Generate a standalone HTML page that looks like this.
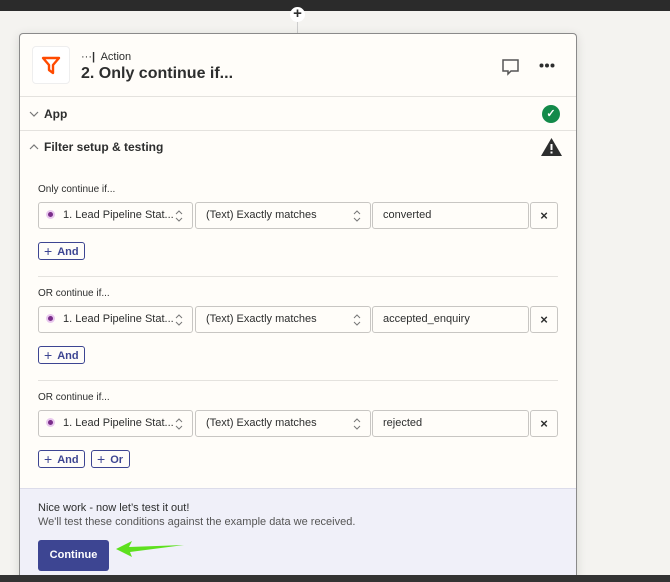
<!DOCTYPE html>
<html><head><style>
*{box-sizing:border-box;margin:0;padding:0}
html,body{width:670px;height:582px;overflow:hidden}
body{background:#f4f3f0;font-family:"Liberation Sans",sans-serif;color:#2d2e2e;position:relative}
.a{position:absolute}
.top{left:0;top:0;width:670px;height:11px;background:#2b2b2b}
.card{left:19px;top:33px;width:558px;height:549px;background:#fffdf9;border:1px solid #8a8a8a;border-bottom:none;border-radius:4px 4px 0 0;box-shadow:0 2px 10px rgba(0,0,0,.12);overflow:hidden}
.hl{height:1px;background:#e4e2de;left:0;width:558px}
.lbl{font-size:10px;color:#2d2e2e}
.box{height:27px;border:1px solid #c8c6c3;border-radius:3px;background:#fffdf9;font-size:11px;line-height:25px;padding-left:10px;color:#2d2e2e}
.btn{height:18px;border:1px solid #3d4592;border-radius:3px;font-size:11px;line-height:16px;color:#3d4592;padding-left:5px;font-weight:bold}
.btn b{font-size:14px;font-weight:normal;margin-right:5px;vertical-align:-1px}
.chev{position:absolute;right:9px;top:7px}
.dot{display:inline-block;width:9px;height:9px;border-radius:50%;background:#7a2d8a;border:2px solid #e9c8ee;vertical-align:-1px;margin-right:8px;margin-left:-3px}
</style></head><body>
<div class="a top"></div>
<div class="a" style="left:297px;top:11px;width:1px;height:25px;background:#ccc"></div>
<div class="a" style="left:290px;top:7px;width:15px;height:15px;border-radius:50%;background:#fff;text-align:center;font-size:15px;line-height:14px;font-weight:bold">+</div>
<div class="a card">
  <div class="a" style="left:12px;top:12px;width:38px;height:38px;border:1px solid #eee;border-radius:4px;background:#fff"></div>
  <svg class="a" style="left:20px;top:20px" width="22" height="22" viewBox="0 0 22 22"><path d="M3 4h16l-6 7v8l-4-3v-5z" fill="none" stroke="#ff4a00" stroke-width="2.4" stroke-linejoin="round"/></svg>
  <div class="a" style="left:61px;top:17px;font-size:11px">···<span style="font-weight:bold">|</span>&nbsp; Action</div>
  <div class="a" style="left:61px;top:31px;font-size:16px;font-weight:bold">2. Only continue if...</div>
  <svg class="a" style="left:481px;top:24px" width="19" height="18" viewBox="0 0 19 18"><path d="M2 2h15v11H10l-3 3v-3H2z" fill="none" stroke="#555" stroke-width="1.5"/></svg>
  <svg class="a" style="left:519px;top:29px" width="16" height="5"><circle cx="2.5" cy="2.5" r="2" fill="#2d2e2e"/><circle cx="8" cy="2.5" r="2" fill="#2d2e2e"/><circle cx="13.5" cy="2.5" r="2" fill="#2d2e2e"/></svg>
  <div class="a hl" style="top:62px"></div>
  <svg class="a" style="left:9px;top:77px" width="10" height="6"><path d="M1 1l4 4 4-4" fill="none" stroke="#777" stroke-width="1.2"/></svg>
  <div class="a" style="left:24px;top:73px;font-size:12px;font-weight:bold">App</div>
  <div class="a" style="left:522px;top:71px;width:18px;height:18px;border-radius:50%;background:#138a4a;color:#fff;font-size:11px;text-align:center;line-height:18px;font-weight:bold">✓</div>
  <div class="a hl" style="top:96px"></div>
  <svg class="a" style="left:9px;top:110px" width="10" height="6"><path d="M1 5l4-4 4 4" fill="none" stroke="#777" stroke-width="1.2"/></svg>
  <div class="a" style="left:24px;top:106px;font-size:12px;font-weight:bold">Filter setup &amp; testing</div>
  <svg class="a" style="left:521px;top:104px" width="21" height="18" viewBox="0 0 21 18"><path d="M10.5 0L21 18H0z" fill="#2d2e2e"/><rect x="9.5" y="6" width="2" height="6" fill="#fff"/><rect x="9.5" y="13.5" width="2" height="2" fill="#fff"/></svg>

  <div class="a lbl" style="left:18px;top:150px">Only continue if...</div>
  <div class="a box" style="left:18px;top:168px;width:155px"><span class="dot"></span>1. Lead Pipeline Stat...<svg class="chev" width="8" height="12"><path d="M1 4l3-3 3 3M1 8l3 3 3-3" fill="none" stroke="#777" stroke-width="1"/></svg></div>
  <div class="a box" style="left:175px;top:168px;width:176px">(Text) Exactly matches<svg class="chev" width="8" height="12"><path d="M1 4l3-3 3 3M1 8l3 3 3-3" fill="none" stroke="#777" stroke-width="1"/></svg></div>
  <div class="a box" style="left:352px;top:168px;width:157px">converted</div>
  <div class="a box" style="left:510px;top:168px;width:28px;padding:0;text-align:center;font-size:13px;font-weight:bold">×</div>
  <div class="a btn" style="left:18px;top:208px;width:47px"><b>+</b>And</div>
  <div class="a hl" style="top:242px;left:18px;width:520px"></div>

  <div class="a lbl" style="left:18px;top:254px">OR continue if...</div>
  <div class="a box" style="left:18px;top:272px;width:155px"><span class="dot"></span>1. Lead Pipeline Stat...<svg class="chev" width="8" height="12"><path d="M1 4l3-3 3 3M1 8l3 3 3-3" fill="none" stroke="#777" stroke-width="1"/></svg></div>
  <div class="a box" style="left:175px;top:272px;width:176px">(Text) Exactly matches<svg class="chev" width="8" height="12"><path d="M1 4l3-3 3 3M1 8l3 3 3-3" fill="none" stroke="#777" stroke-width="1"/></svg></div>
  <div class="a box" style="left:352px;top:272px;width:157px">accepted_enquiry</div>
  <div class="a box" style="left:510px;top:272px;width:28px;padding:0;text-align:center;font-size:13px;font-weight:bold">×</div>
  <div class="a btn" style="left:18px;top:312px;width:47px"><b>+</b>And</div>
  <div class="a hl" style="top:346px;left:18px;width:520px"></div>

  <div class="a lbl" style="left:18px;top:358px">OR continue if...</div>
  <div class="a box" style="left:18px;top:376px;width:155px"><span class="dot"></span>1. Lead Pipeline Stat...<svg class="chev" width="8" height="12"><path d="M1 4l3-3 3 3M1 8l3 3 3-3" fill="none" stroke="#777" stroke-width="1"/></svg></div>
  <div class="a box" style="left:175px;top:376px;width:176px">(Text) Exactly matches<svg class="chev" width="8" height="12"><path d="M1 4l3-3 3 3M1 8l3 3 3-3" fill="none" stroke="#777" stroke-width="1"/></svg></div>
  <div class="a box" style="left:352px;top:376px;width:157px">rejected</div>
  <div class="a box" style="left:510px;top:376px;width:28px;padding:0;text-align:center;font-size:13px;font-weight:bold">×</div>
  <div class="a btn" style="left:18px;top:416px;width:47px"><b>+</b>And</div>
  <div class="a btn" style="left:71px;top:416px;width:39px"><b>+</b>Or</div>

  <div class="a" style="left:0;top:454px;width:558px;height:120px;background:#f0f0f9;border-top:1px solid #dcdcea"></div>
  <div class="a" style="left:18px;top:468px;font-size:11px;color:#2d2e2e">Nice work - now let’s test it out!</div>
  <div class="a" style="left:18px;top:482px;font-size:11px;color:#555">We'll test these conditions against the example data we received.</div>
  <div class="a" style="left:18px;top:506px;width:71px;height:31px;background:#3d4592;border-radius:3px;color:#fff;font-size:11px;font-weight:bold;text-align:center;line-height:31px">Continue</div>
</div>
<svg class="a" style="left:112px;top:538px" width="75" height="22" viewBox="0 0 75 22"><path d="M4 11L20 3L17 9L72 7L18 14L20 19Z" fill="#5ee01f"/></svg>
<div class="a" style="left:0;top:575px;width:670px;height:7px;background:#333"></div>
</body></html>
